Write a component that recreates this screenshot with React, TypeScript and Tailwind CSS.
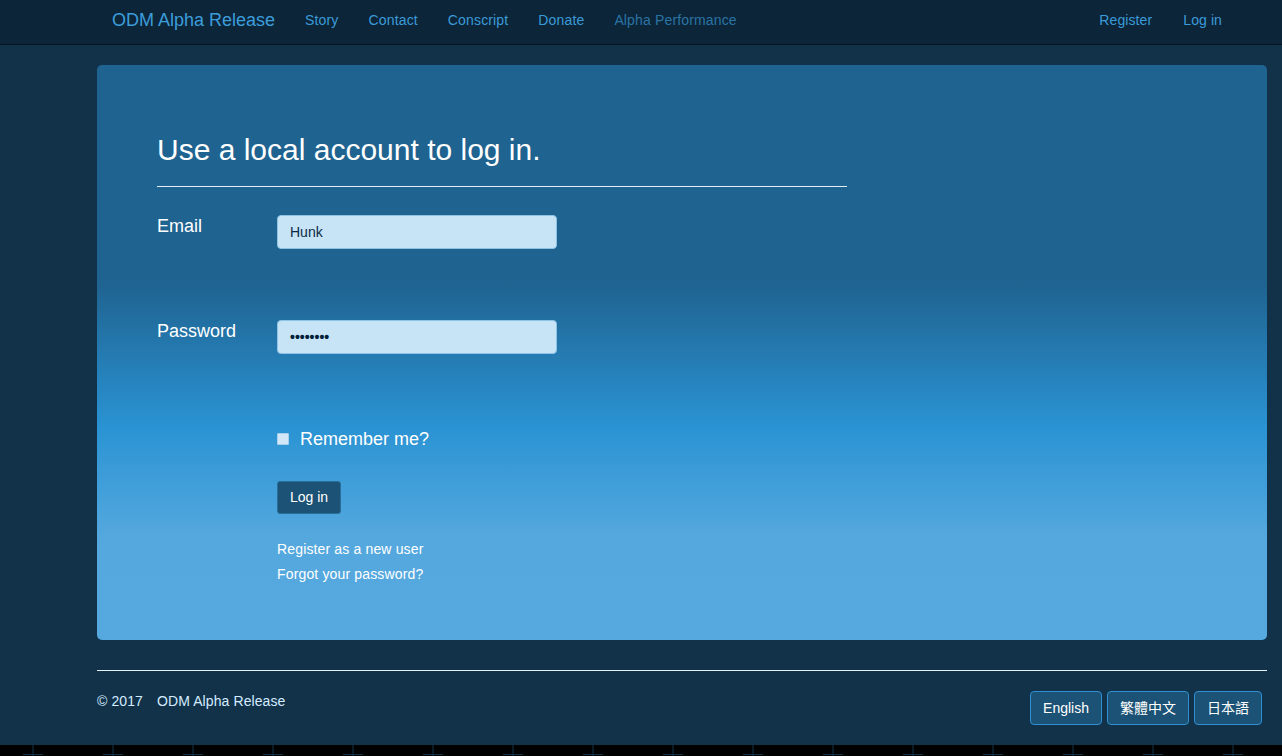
const navLinks = [
  { label: 'Story', dim: false },
  { label: 'Contact', dim: false },
  { label: 'Conscript', dim: false },
  { label: 'Donate', dim: false },
  { label: 'Alpha Performance', dim: true },
]

const languages = ['English', '繁體中文', '日本語']

function CrossStrip() {
  return (
    <svg className="block w-full h-[11px]" aria-hidden="true">
      <defs>
        <pattern id="cross" width="80" height="11" patternUnits="userSpaceOnUse">
          <line x1="33" y1="0" x2="33" y2="11" stroke="#12324a" strokeWidth="1" />
          <line x1="23" y1="9.5" x2="43" y2="9.5" stroke="#12324a" strokeWidth="1" />
        </pattern>
      </defs>
      <rect width="100%" height="11" fill="#000" />
      <rect width="100%" height="11" fill="url(#cross)" />
    </svg>
  )
}

export default function App() {
  return (
    <div className="w-[1282px] h-[756px] overflow-hidden bg-[#12324a] font-['Liberation_Sans',Arial,sans-serif]">
      {/* Navbar */}
      <nav className="h-[45px] bg-[#0c2539] border-b border-[#06131e] flex items-center pb-[4px] pl-[97px] pr-[45px]">
        <span className="px-[15px] text-[18px] text-[#3c9ddb] leading-5">ODM Alpha Release</span>
        <ul className="flex">
          {navLinks.map((l) => (
            <li
              key={l.label}
              className={`px-[15px] text-[14px] leading-5 tracking-[0.15px] ${l.dim ? 'text-[#2a74a4]' : 'text-[#3b9bd8]'}`}
            >
              {l.label}
            </li>
          ))}
        </ul>
        <ul className="flex ml-auto">
          <li className="pl-[15px] pr-[16px] text-[14px] leading-5 tracking-[0.1px] text-[#3b9bd8]">Register</li>
          <li className="px-[15px] text-[14px] leading-5 tracking-[0.1px] text-[#3b9bd8]">Log in</li>
        </ul>
      </nav>

      <div className="h-[700px] pl-[97px] pr-[15px] pt-5">
        {/* Card */}
        <div className="h-[575px] rounded-[5px] px-[60px] pt-[68px] bg-[linear-gradient(180deg,#1f6390_0%,#1f6390_38%,#2a93d3_63%,#54a8de_82%,#55a9de_100%)]">
          <h2 className="text-[30px] leading-[33px] text-white">Use a local account to log in.</h2>
          <hr className="mt-5 w-[690px] border-0 border-t border-[#e6eef5]" />

          <div className="mt-7 flex flex-col gap-[71px]">
            <div className="flex items-start">
              <label className="w-[120px] pt-px text-[18px] leading-5 text-white">Email</label>
              <div className="w-[280px] h-[34px] rounded-[4px] bg-[#c7e3f6] border border-[#8ec3e6] px-3 flex items-center text-[14px] text-[#0b2a45]">
                Hunk
              </div>
            </div>
            <div className="flex items-start">
              <label className="w-[120px] pt-px text-[18px] leading-5 text-white">Password</label>
              <div className="w-[280px] h-[34px] rounded-[4px] bg-[#c7e3f6] border border-[#8ec3e6] px-3 flex items-center text-[14px] font-bold text-[#00203a]">
                ••••••••
              </div>
            </div>
          </div>

          <div className="pl-[120px] mt-[75px]">
            <div className="flex items-center h-5">
              <span className="w-3 h-3 bg-[#d2e8f7] border border-[#a9d0ea] rounded-[1px]" />
              <span className="ml-[11px] text-[18px] leading-5 text-white">Remember me?</span>
            </div>
            <button className="mt-[32px] h-[33px] w-[64px] rounded-[3px] bg-[#1b5275] border border-[#2a6e9a] text-[14px] text-white">
              Log in
            </button>
            <p className="mt-[25px] text-[14px] leading-5 tracking-[0.15px] text-white">Register as a new user</p>
            <p className="mt-[5px] text-[14px] leading-5 tracking-[0.15px] text-white">Forgot your password?</p>
          </div>
        </div>

        {/* Footer */}
        <hr className="mt-[30px] border-0 border-t border-[#e8f1f8]" />
        <div className="flex items-start mt-5">
          <p className="text-[14px] leading-5 tracking-[0.1px] text-[#d4ecff]">
            © 2017<span className="ml-[14px]">ODM Alpha Release</span>
          </p>
          <div className="ml-auto mr-[5px] flex gap-[5px]">
            {languages.map((lang) => (
              <button
                key={lang}
                className="h-[34px] px-3 rounded-[4px] bg-[#1b5275] border border-[#2f8fd0] text-[14px] text-white font-['Liberation_Sans','Noto_Sans_CJK_TC',sans-serif]"
              >
                {lang}
              </button>
            ))}
          </div>
        </div>
      </div>

      <CrossStrip />
    </div>
  )
}
